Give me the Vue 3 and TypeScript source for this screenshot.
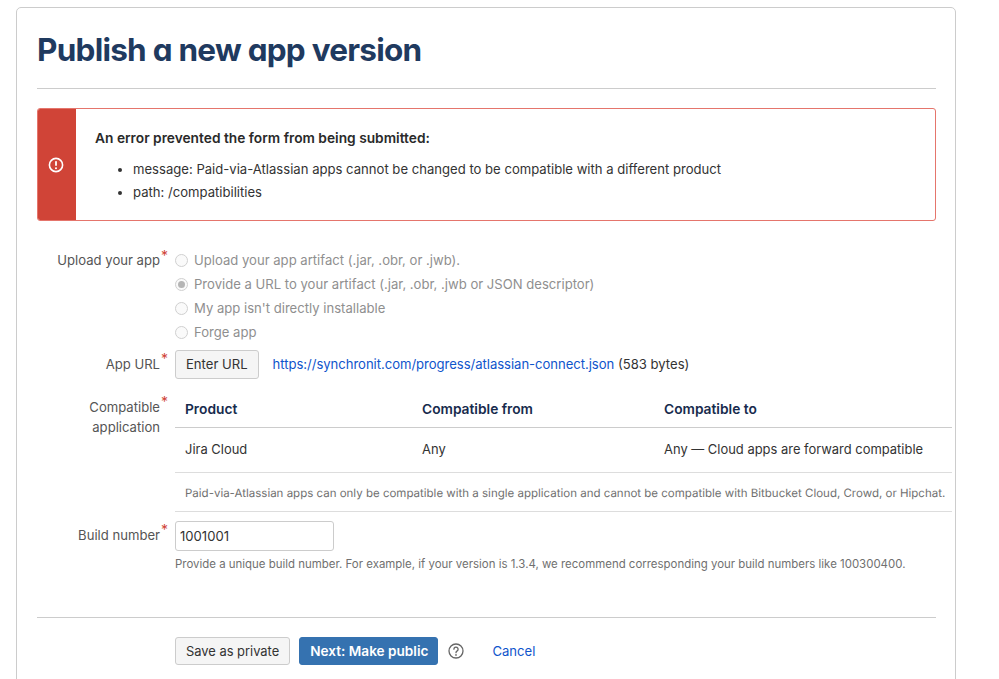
<script setup lang="ts">
const radios = [
  { label: 'Upload your app artifact (.jar, .obr, or .jwb).', checked: false },
  { label: 'Provide a URL to your artifact (.jar, .obr, .jwb or JSON descriptor)', checked: true },
  { label: "My app isn't directly installable", checked: false },
  { label: 'Forge app', checked: false },
]
</script>

<template>
  <div class="page">
    <main class="card">
      <h1 class="title">Publish a new app version</h1>
      <section class="alert">
        <div class="alert-side">
          <svg width="16" height="16" viewBox="0 0 16 16" fill="none">
            <circle cx="8" cy="8" r="6.6" stroke="#fff" stroke-width="1.6" />
            <rect x="7.1" y="3.9" width="1.8" height="5" rx="0.9" fill="#fff" />
            <circle cx="8" cy="11.2" r="1.05" fill="#fff" />
          </svg>
        </div>
        <div class="alert-body">
          <p class="alert-head">An error prevented the form from being submitted:</p>
          <ul class="alert-list">
            <li>message: Paid-via-Atlassian apps cannot be changed to be compatible with a different product</li>
            <li>path: /compatibilities</li>
          </ul>
        </div>
      </section>

      <form class="form" @submit.prevent>
        <div class="row upload-row">
          <div class="label lh-24">Upload your app<sup class="req">*</sup></div>
          <div class="field radios">
            <label v-for="r in radios" :key="r.label" class="radio">
              <span class="dot" :class="{ checked: r.checked }"></span>{{ r.label }}
            </label>
          </div>
        </div>

        <div class="row url-row">
          <div class="label">App URL<sup class="req">*</sup></div>
          <div class="field url-field">
            <button type="button" class="btn">Enter URL</button>
            <span class="url-text"><a class="link url-link" href="#">https://synchronit.com/progress/atlassian-connect.json</a> (583 bytes)</span>
          </div>
        </div>

        <div class="row compat-row">
          <div class="label compat-label">Compatible<sup class="req">*</sup><br />application</div>
          <div class="field compat">
            <div class="grid head">
              <span>Product</span><span>Compatible from</span><span>Compatible to</span>
            </div>
            <div class="grid body">
              <span>Jira Cloud</span><span>Any</span><span>Any — Cloud apps are forward compatible</span>
            </div>
            <div class="note">Paid-via-Atlassian apps can only be compatible with a single application and cannot be compatible with Bitbucket Cloud, Crowd, or Hipchat.</div>
          </div>
        </div>

        <div class="row build-row">
          <div class="label build-label">Build number<sup class="req">*</sup></div>
          <div class="field">
            <input class="input" type="text" value="1001001" />
            <p class="help">Provide a unique build number. For example, if your version is 1.3.4, we recommend corresponding your build numbers like 100300400.</p>
          </div>
        </div>

        <div class="actions">
          <button type="button" class="btn save">Save as private</button>
          <button type="submit" class="btn primary">Next: Make public</button>
          <svg class="help-icon" width="16" height="16" viewBox="0 0 16 16" fill="none">
            <circle cx="8" cy="8" r="7" stroke="#666" stroke-width="1.3" />
            <path d="M5.9 6.2a2.1 2.1 0 1 1 3.3 1.7c-.8.5-1.2.9-1.2 1.8" stroke="#666" stroke-width="1.3" stroke-linecap="round" />
            <circle cx="8" cy="11.9" r=".85" fill="#666" />
          </svg>
          <a class="link cancel" href="#">Cancel</a>
        </div>
      </form>
    </main>
  </div>
</template>

<style>
html, body { margin: 0; background: #fff; overflow: hidden; }
</style>

<style scoped>
.page {
  height: 679px;
  overflow: hidden;
  padding: 7px 43px 0 16px;
  font-family: Inter, "Liberation Sans", sans-serif;
  font-size: 13.1px;
  line-height: 20px;
  color: #333;
}
.card {
  box-sizing: border-box;
  width: 940px;
  height: 720px;
  border: 1px solid #ccc;
  border-radius: 5px;
  padding: 0 19px 0 20px;
}
.title {
  margin: 0;
  height: 81px;
  box-sizing: border-box;
  padding-top: 21px;
  border-bottom: 1px solid #ccc;
  font-size: 31.5px;
  line-height: 42px;
  font-weight: 700;
  letter-spacing: -0.75px;
  color: #1f3a5f;
  font-feature-settings: "cv11" 1;
}
.alert {
  display: flex;
  height: 113px;
  box-sizing: border-box;
  margin-top: 19px;
  border: 1px solid #e5756c;
  border-radius: 3px;
  overflow: hidden;
}
.alert-side {
  width: 39px;
  margin: -1px 0 -1px -1px;
  flex: none;
  background: #d04437;
  display: flex;
  align-items: center;
  justify-content: center;
}
.alert-side svg { margin-left: -2px; }
.alert-body { padding: 19px 0 0 19px; }
.alert-head { margin: 0; font-weight: 600; font-size: 13.75px; color: #2a2a2a; }
.alert-list { margin: 10px 0 0; padding: 0 0 0 38px; }
.alert-list li { line-height: 23px; }
.form { display: flex; flex-direction: column; }
.row { display: flex; align-items: flex-start; }
.label {
  position: relative;
  width: 128px;
  flex: none;
  margin-left: -5px;
  padding-right: 15px;
  text-align: right;
  color: #555;
  box-sizing: content-box;
}
.req {
  position: absolute;
  margin-left: 1px;
  margin-top: -2px;
  color: #d04437;
  font-size: 14px;
  line-height: 14px;
}
.upload-row { margin-top: 27px; }
.lh-24 { line-height: 24px; }
.lh-24 .req { margin-top: 1px; }
.radio {
  display: flex;
  align-items: center;
  height: 24px;
  color: #8f8f8f;
}
.dot {
  box-sizing: border-box;
  width: 13px;
  height: 13px;
  margin-right: 6px;
  border: 1px solid #d0d0d0;
  border-radius: 50%;
  background: #fafafa;
  display: flex;
  align-items: center;
  justify-content: center;
}
.dot.checked::after {
  content: "";
  width: 7px;
  height: 7px;
  border-radius: 50%;
  background: #b5b5b5;
}
.url-row { margin-top: 6px; align-items: center; }
.url-row .label { padding-bottom: 2px; }
.url-row .btn { padding-bottom: 2px; }
.url-field { display: flex; align-items: center; }
.url-text { margin-left: 14px; padding-bottom: 2px; }
.link { color: #0f55cc; text-decoration: none; }
.url-link { letter-spacing: -0.04px; }
.btn {
  box-sizing: border-box;
  height: 29px;
  padding: 0 10px;
  border: 1px solid #ccc;
  border-radius: 3px;
  background: #f5f5f5;
  color: #333;
  font: inherit;
}
.compat-row { margin-top: 12px; }
.compat-label { padding-top: 6px; line-height: 20px; }
.compat { width: 777px; flex: none; }
.grid {
  display: grid;
  grid-template-columns: 237px 242px 1fr;
  padding-left: 10px;
  border-bottom: 1px solid #ddd;
}
.head {
  height: 37px;
  align-items: center;
  font-weight: 600;
  font-size: 13.75px;
  color: #172b4d;
  box-sizing: border-box;
  border-bottom-color: #ccc;
}
.body {
  height: 45px;
  padding-bottom: 2px;
  align-items: center;
  box-sizing: border-box;
  font-size: 12.95px;
}
.note {
  height: 39px;
  box-sizing: border-box;
  padding: 10px 0 0 10px;
  border-bottom: 1px solid #ddd;
  color: #707070;
  font-size: 11.5px;
  text-rendering: geometricPrecision;
  white-space: nowrap;
}
.build-row { margin-top: 9px; }
.build-label { padding-top: 4px; }
.input {
  display: block;
  box-sizing: border-box;
  width: 159px;
  height: 30px;
  padding: 0 4px;
  border: 1px solid #ccc;
  border-radius: 3px;
  color: #333;
  font: inherit;
}
.help {
  margin: 3px 0 0;
  color: #707070;
  font-size: 11.44px;
  white-space: nowrap;
}
.actions {
  display: flex;
  align-items: center;
  margin-top: 43px;
  padding: 19px 0 0 138px;
  border-top: 1px solid #ccc;
}
.actions .btn { height: 28px; }
.save { font-size: 12.9px; padding-top: 1px; }
.primary {
  margin-left: 9px;
  padding: 0 9px 0 10px;
  background: #3572b0;
  border-color: #3572b0;
  color: #fff;
  font-weight: 600;
  font-size: 13.6px;
}
.help-icon { margin-left: 10px; }
.cancel { margin-left: 28px; }
</style>
